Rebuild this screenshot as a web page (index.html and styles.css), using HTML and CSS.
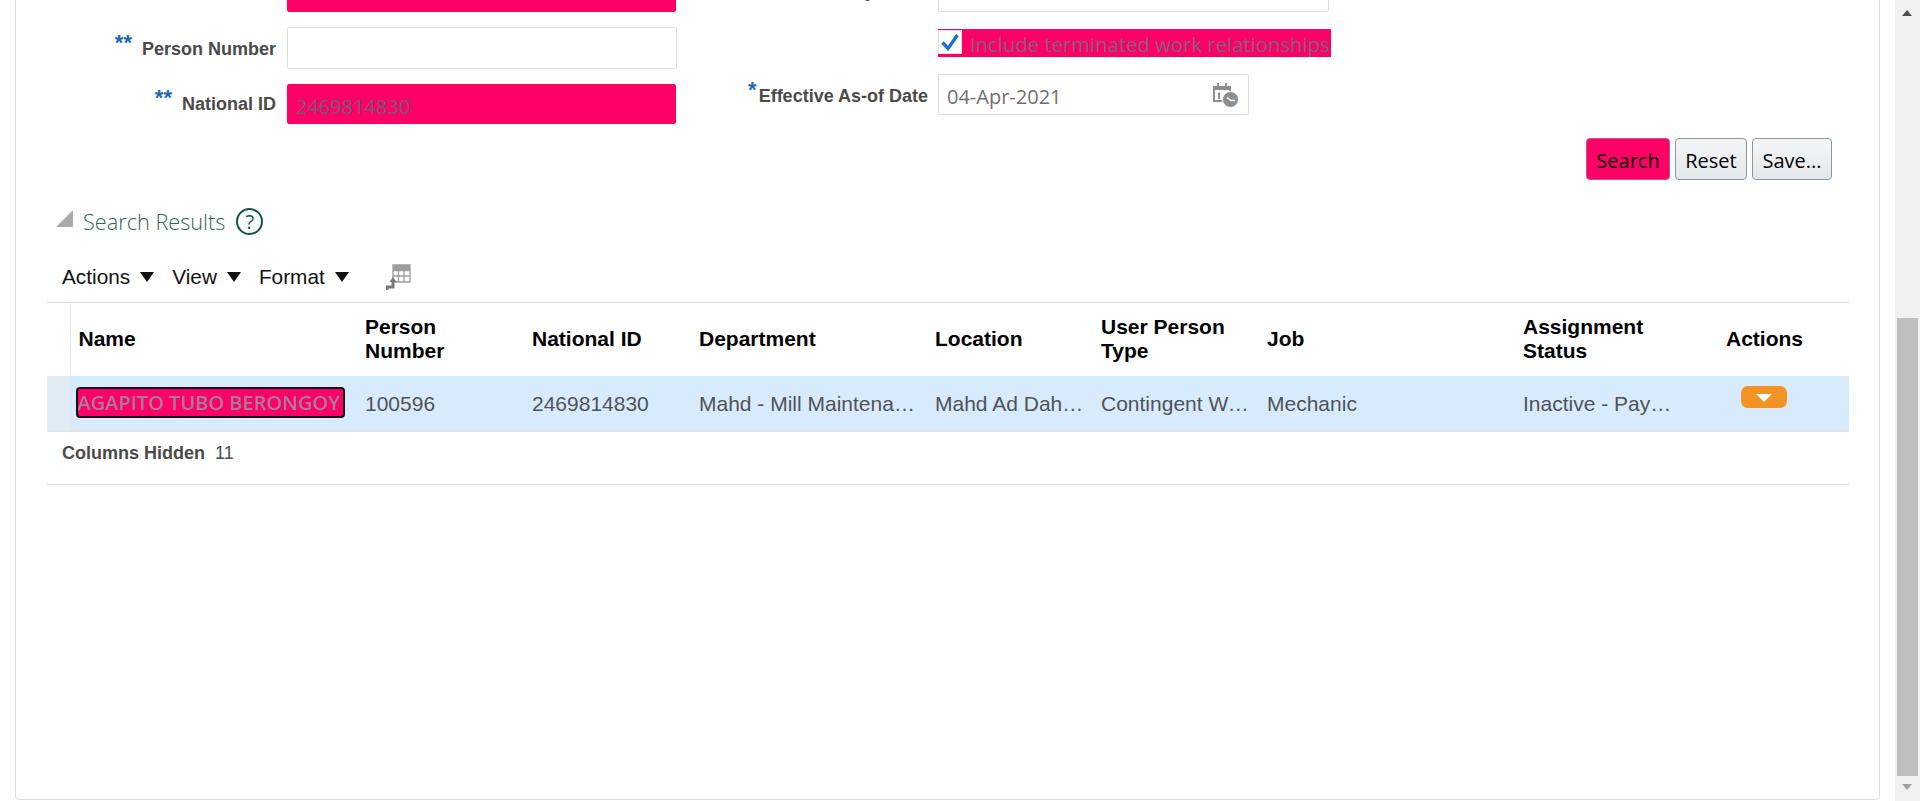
FILE: index.html
```html
<!DOCTYPE html>
<html lang="en">
<head>
    <meta charset="UTF-8">
    <title>Person Management</title>
    <link rel="stylesheet" href="styles.css">
</head>
<body>
    <div class="main">
        <div class="panel">
            <div class="form">
                <div class="form-col form-left">
                    <div class="field field-top">
                        <label class="field-label"></label>
                        <div class="input input-pink input-name"></div>
                    </div>
                    <div class="field field-number">
                        <label class="field-label"><span class="req req-double">**</span>Person Number</label>
                        <div class="input input-number"></div>
                    </div>
                    <div class="field field-national">
                        <label class="field-label"><span class="req req-double">**</span>National ID</label>
                        <div class="input input-pink input-national">2469814830</div>
                    </div>
                </div>
                <div class="form-col form-right">
                    <div class="field field-top">
                        <label class="field-label">Keywords</label>
                        <div class="input input-keywords"></div>
                    </div>
                    <div class="check-row">
                        <span class="checkbox">
                            <svg width="20" height="20" viewBox="0 0 20 20"><path d="M2.5 10.5 L8 16.5 L17.5 3" fill="none" stroke="#1a73c8" stroke-width="3.4"/></svg>
                        </span>
                        <span class="check-text">Include terminated work relationships</span>
                    </div>
                    <div class="field field-date">
                        <label class="field-label"><span class="req">*</span>Effective As-of Date</label>
                        <div class="input input-date">
                            <span>04-Apr-2021</span>
                            <svg class="date-icon" width="26" height="25" viewBox="0 0 26 25">
                                <path d="M1 4h16v14H1z" fill="none" stroke="#8b8f92" stroke-width="2"/>
                                <path d="M1 3h16v4H1z" fill="#8b8f92"/>
                                <path d="M4 0h2v4H4zM12 0h2v4h-2z" fill="#8b8f92"/>
                                <path d="M5 10l2-1v7H5z" fill="#8b8f92"/>
                                <circle cx="17.5" cy="16.5" r="8" fill="#8b8f92" stroke="#fff" stroke-width="1"/>
                                <path d="M14 14.5l4 3h4" fill="none" stroke="#fff" stroke-width="1.4"/>
                            </svg>
                        </div>
                    </div>
                </div>
            </div>

            <div class="form-buttons">
                <button class="btn btn-search">Search</button>
                <button class="btn btn-reset">Reset</button>
                <button class="btn btn-save">Save...</button>
            </div>

            <div class="section-head">
                <svg class="disclosure" width="17" height="17" viewBox="0 0 17 17"><path d="M0 17L17 0v17z" fill="#a9abad"/></svg>
                <span class="section-title">Search Results</span>
                <span class="help">?</span>
            </div>

            <div class="toolbar">
                <span class="menu menu-actions">Actions<i class="caret"></i></span>
                <span class="menu menu-view">View<i class="caret"></i></span>
                <span class="menu menu-format">Format<i class="caret"></i></span>
                <svg class="detach" width="26" height="27" viewBox="0 0 26 27">
                    <path d="M7 1h17v17H7zM7 6.500h17M7 12h17M12.500 6v12M18 6v12" fill="none" stroke="#9a9c9e" stroke-width="1.300"/>
                    <path d="M7 1h17v5H7z" fill="#9a9c9e"/>
                    <path d="M1 26v-3h6v-6" fill="none" stroke="#77797b" stroke-width="3"/>
                    <path d="M3.500 18L7 13l3.500 5z" fill="#77797b"/>
                </svg>
            </div>

            <table class="results">
                <thead>
                    <tr>
                        <th class="col-sel"></th>
                        <th class="col-name">Name</th>
                        <th class="col-number">Person<br>Number</th>
                        <th class="col-national">National ID</th>
                        <th class="col-dept">Department</th>
                        <th class="col-loc">Location</th>
                        <th class="col-type">User Person<br>Type</th>
                        <th class="col-job">Job</th>
                        <th class="col-status">Assignment<br>Status</th>
                        <th class="col-actions">Actions</th>
                    </tr>
                </thead>
                <tbody>
                    <tr>
                        <td class="col-sel"></td>
                        <td class="col-name"><a class="name-link">AGAPITO TUBO BERONGOY</a></td>
                        <td>100596</td>
                        <td>2469814830</td>
                        <td>Mahd - Mill Maintenance</td>
                        <td>Mahd Ad Dahab</td>
                        <td>Contingent Worker</td>
                        <td>Mechanic</td>
                        <td class="col-status">Inactive - Payroll Eligible</td>
                        <td class="col-actions"><span class="row-action"><i></i></span></td>
                    </tr>
                </tbody>
            </table>
            <div class="table-foot"><b>Columns Hidden</b><span>11</span></div>
        </div>
    </div>
    <div class="scrollbar">
        <i class="scroll-up"></i>
        <div class="scroll-thumb"></div>
        <i class="scroll-down"></i>
    </div>
</body>
</html>
```

FILE: styles.css
```css
body {
    margin: 0;
    height: 801px;
    overflow: hidden;
    display: flex;
    background-color: white;
    font-family: "Liberation Sans", Arial, sans-serif;
}
.main {
    flex: 1;
    height: 800px;
    padding: 0 15px;
    overflow: hidden;
}
.panel {
    display: flow-root;
    height: 799px;
    border: 1px solid #dcdfe2;
    border-top: none;
    border-radius: 0 0 4px 4px;
}

/* search form */
.form {
    display: flex;
    margin-top: -29px;
}
.form-left {
    width: 661px;
}
.form-right {
    margin-left: 23px;
}
.field {
    display: flex;
    align-items: center;
}
.field-label {
    width: 260px;
    margin-right: 11px;
    text-align: right;
    font-size: 18px;
    font-weight: bold;
    color: #4a4a4a;
    flex: none;
}
.form-right .field-label {
    width: 228px;
    margin-right: 10px;
}
.req {
    color: #2468ad;
    font-size: 22px;
    font-weight: bold;
    position: relative;
    top: -5px;
    margin-right: 2px;
}
.req-double {
    margin-right: 10px;
}
.input {
    box-sizing: border-box;
    height: 41px;
    border: 1px solid #dcdfe2;
    border-radius: 2px;
    background-color: white;
    font-family: "Open Sans", sans-serif;
    font-size: 20px;
    color: #6f6f6f;
    padding: 0 8px;
    line-height: 44px;
}
.input-name, .input-number, .input-national {
    width: 390px;
}
.input-number {
    height: 42px;
}
.input-keywords {
    width: 391px;
}
.input-pink {
    width: 389px;
    background-color: #ff0066;
    border-color: #ff0066;
    color: #705c70;
}
.field-number {
    margin-top: 15px;
}
.field-national {
    margin-top: 15px;
}
.input-national {
    height: 40px;
}
.field-national .field-label {
    margin-top: -2px;
}
.check-row {
    display: flex;
    width: 393px;
    height: 28px;
    margin: 17px 0 0 238px;
    background-color: #ff0066;
}
.checkbox {
    box-sizing: border-box;
    width: 24px;
    height: 24px;
    margin-top: 1px;
    background-color: white;
    border: 1px solid #dcdfe2;
    display: flex;
    align-items: center;
    justify-content: center;
    flex: none;
}
.check-text {
    margin-left: 8px;
    font-family: "Open Sans", sans-serif;
    font-size: 20.3px;
    line-height: 30px;
    white-space: nowrap;
    color: #80607a;
}
.field-date {
    margin-top: 17px;
}
.input-date {
    width: 311px;
    display: flex;
    justify-content: space-between;
    padding-right: 9px;
}
.date-icon {
    margin-top: 8px;
}

.form-buttons {
    display: flex;
    justify-content: flex-end;
    gap: 5px;
    margin-top: 14px;
    padding-right: 47px;
}
.btn {
    box-sizing: border-box;
    height: 42px;
    padding: 2px 0 0;
    border: 1px solid #8a97a3;
    border-radius: 4px;
    background: linear-gradient(#f4f6f7, #e4e8eb);
    font-family: "Open Sans", sans-serif;
    font-size: 20px;
    color: black;
}
.btn-search {
    width: 84px;
    background: #ff0066;
    border-color: #c9567f;
}
.btn-reset {
    width: 72px;
}
.btn-save {
    width: 80px;
}

/* results section */
.section-head {
    display: flex;
    align-items: center;
    height: 30px;
    margin: 26px 0 0 40px;
}
.disclosure {
    margin-top: -6px;
}
.section-title {
    margin-left: 10px;
    font-family: "Open Sans", sans-serif;
    font-weight: 300;
    font-size: 21.7px;
    color: #2f6558;
}
.help {
    box-sizing: border-box;
    width: 27px;
    height: 27px;
    margin-left: 11px;
    border: 2px solid #0f5345;
    border-radius: 50%;
    text-align: center;
    font-family: "Open Sans", sans-serif;
    font-size: 20px;
    line-height: 23px;
    color: #0f5345;
}
.toolbar {
    display: flex;
    align-items: center;
    height: 28px;
    margin: 27px 0 0 46px;
    font-size: 20.8px;
    color: #111;
}
.menu {
    display: flex;
    align-items: center;
}
.caret {
    width: 0;
    height: 0;
    margin-left: 10px;
    border-left: 7px solid transparent;
    border-right: 7px solid transparent;
    border-top: 10px solid #111;
}
.menu-view {
    margin-left: 18px;
}
.menu-format {
    margin-left: 18px;
}
.detach {
    margin-left: 37px;
}

.results {
    table-layout: fixed;
    border-collapse: collapse;
    width: 1802px;
    margin: 11px 0 0 31px;
    border-top: 1px solid #d8dde2;
}
.results th {
    height: 73px;
    padding: 0 8px;
    text-align: left;
    font-size: 21px;
    line-height: 24px;
    color: black;
    box-sizing: border-box;
}
.results th.col-sel {
    width: 23px;
    padding: 0;
}
.results th.col-name {
    width: 287px;
    border-left: 1px solid #dfe5ea;
}
.col-number, .col-national {
    width: 167px;
}
.col-dept {
    width: 236px;
}
.col-loc {
    width: 166px;
}
.col-type {
    width: 166px;
}
.col-job {
    width: 256px;
}
.col-status {
    width: 203px;
}
.results td {
    height: 55px;
    padding: 2px 8px 0;
    background-color: #d8ebfc;
    font-size: 21px;
    color: #4f5358;
    white-space: nowrap;
    overflow: hidden;
    text-overflow: ellipsis;
    box-sizing: border-box;
    border-bottom: 2px solid #dfe5ea;
}
.results td.col-status {
    padding-right: 44px;
}
.results td.col-sel {
    padding: 0;
    background-color: #e1ebf4;
}
.results td.col-name {
    padding: 0 5px;
    border-left: 1px solid #dfe5ea;
}
.name-link {
    display: block;
    box-sizing: border-box;
    width: 269px;
    height: 31px;
    border: 2px solid #111;
    border-radius: 4px;
    background-color: #ff0066;
    font-family: "Open Sans", sans-serif;
    font-size: 20px;
    font-weight: 600;
    line-height: 28px;
    color: #a87b97;
    white-space: nowrap;
    overflow: hidden;
}
.results td.col-actions {
    text-align: center;
    padding: 0;
}
.col-actions {
    width: 131px;
}
.results th.col-actions {
    padding-right: 48px;
}
.row-action {
    display: block;
    width: 46px;
    height: 22px;
    margin: -11px 0 0 23px;
    border-radius: 7px;
    background-color: #f39324;
    position: relative;
}
.row-action i {
    position: absolute;
    left: 15px;
    top: 8px;
    border-left: 8px solid transparent;
    border-right: 8px solid transparent;
    border-top: 8px solid white;
}
.table-foot {
    box-sizing: border-box;
    width: 1802px;
    height: 53px;
    margin-left: 31px;
    padding: 11px 0 0 15px;
    border-bottom: 1px solid #dcdfe2;
    font-size: 18px;
    color: #4a4a4a;
}
.table-foot span {
    margin-left: 10px;
}

.scrollbar {
    width: 25px;
    flex: none;
    background-color: #f1f1f1;
    padding: 10px 2px 0;
    box-sizing: border-box;
}
.scroll-up {
    display: block;
    width: 0;
    margin: 0 0 302px 5px;
    border-left: 5.5px solid transparent;
    border-right: 5.5px solid transparent;
    border-bottom: 6px solid #505050;
}
.scroll-thumb {
    height: 458px;
    background-color: #bebebe;
}
.scroll-down {
    display: block;
    width: 0;
    margin: 8px 0 0 5px;
    border-left: 5.5px solid transparent;
    border-right: 5.5px solid transparent;
    border-top: 6px solid #a0a0a0;
}
```
